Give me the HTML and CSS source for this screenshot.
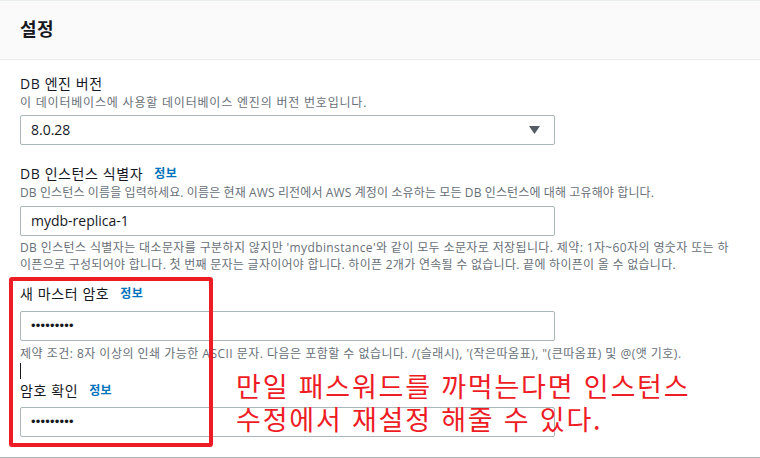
FILE: index.html
```html
<!DOCTYPE html>
<html lang="ko">
<head>
<meta charset="utf-8">
<title>설정</title>
<link rel="stylesheet" href="styles.css">
</head>
<body>
<div class="panel">
  <header class="panel-header">
    <h2 class="panel-title">설정</h2>
  </header>
  <div class="panel-body">
    <div class="field field-engine">
      <div class="label">DB 엔진 버전</div>
      <div class="desc desc-engine">이 데이터베이스에 사용할 데이터베이스 엔진의 버전 번호입니다.</div>
      <div class="control select">
        <span class="value">8.0.28</span>
        <svg class="caret-down" width="11" height="8" viewBox="0 0 11 8"><polygon points="0,0 11,0 5.5,8" fill="#545b64"/></svg>
      </div>
    </div>

    <div class="field field-id">
      <div class="label">DB 인스턴스 식별자<a class="info">정보</a></div>
      <div class="desc desc-id">DB 인스턴스 이름을 입력하세요. 이름은 현재 AWS 리전에서 AWS 계정이 소유하는 모든 DB 인스턴스에 대해 고유해야 합니다.</div>
      <div class="control input"><span class="value">mydb-replica-1</span></div>
      <div class="help">
        <span class="help-line help-l1">DB 인스턴스 식별자는 대소문자를 구분하지 않지만 'mydbinstance'와 같이 모두 소문자로 저장됩니다. 제약: 1자~60자의 영숫자 또는 하</span>
        <span class="help-line help-l2">이픈으로 구성되어야 합니다. 첫 번째 문자는 글자이어야 합니다. 하이픈 2개가 연속될 수 없습니다. 끝에 하이픈이 올 수 없습니다.</span>
      </div>
    </div>

    <div class="field field-pass">
      <div class="label">새 마스터 암호<a class="info">정보</a></div>
      <div class="control input"><span class="value dots">•••••••••</span></div>
      <div class="help help-pass">제약 조건: 8자 이상의 인쇄 가능한 ASCII 문자. 다음은 포함할 수 없습니다. /(슬래시), '(작은따옴표), "(큰따옴표) 및 @(앳 기호).</div>
      <div class="text-caret"></div>
    </div>

    <div class="field field-confirm">
      <div class="label">암호 확인<a class="info">정보</a></div>
      <div class="control input"><span class="value dots">•••••••••</span></div>
    </div>
  </div>

  <div class="annot-box"></div>
  <div class="annot-text">만일 패스워드를 까먹는다면 인스턴스<br>수정에서 재설정 해줄 수 있다.</div>
</div>
</body>
</html>
```

FILE: styles.css
```css
* { box-sizing: border-box; }

html, body {
  margin: 0;
  padding: 0;
  background: #ffffff;
}

body {
  font-family: "Open Sans", "Noto Sans CJK KR", sans-serif;
  color: #16191f;
  width: 760px;
  height: 458px;
  overflow: hidden;
}

.panel {
  position: relative;
  width: 760px;
}

.panel-header {
  background: #fafafa;
  border-top: 1px solid #eaeded;
  border-bottom: 1px solid #eaeded;
  height: 60px;
  padding: 16px 20px 0;
}

.panel-title {
  margin: 0;
  font-size: 18px;
  line-height: 24px;
  font-weight: 700;
  letter-spacing: 0.5px;
  color: #16191f;
}

.panel-body {
  padding: 14px 20px 20px;
  border-bottom: 1px solid #aab7b8;
}

.field { display: flex; flex-direction: column; align-items: flex-start; }

.field-id { margin-top: 19px; }
.field-pass { margin-top: 11px; }
.field-confirm { margin-top: 2px; }

.label {
  font-size: 14px;
  line-height: 20px;
  letter-spacing: 0.6px;
  color: #16191f;
  display: flex;
  align-items: center;
}

.info {
  margin-left: 11px;
  font-size: 12px;
  font-weight: 700;
  letter-spacing: 0.4px;
  color: #0073bb;
  text-decoration: none;
}

.desc {
  font-size: 12px;
  line-height: 17px;
  color: #687078;
  white-space: nowrap;
}

.desc-engine { letter-spacing: 0.8px; }
.desc-id { letter-spacing: 0.12px; }

.help {
  font-size: 12px;
  line-height: 17px;
  color: #687078;
  margin-top: 3px;
  white-space: nowrap;
  display: flex;
  flex-direction: column;
}

.help-l1 { letter-spacing: 0.38px; }
.help-l2 { letter-spacing: 0.28px; }

.help-pass {
  margin-top: 4px;
  letter-spacing: 0.48px;
}

.control {
  width: 535px;
  height: 30px;
  border: 1px solid #aab7b8;
  border-radius: 2px;
  background: #fff;
  display: flex;
  align-items: center;
  padding: 0 14px 0 10px;
  font-size: 14px;
  color: #16191f;
}

.field-engine .control { margin-top: 4px; }
.field-id .control { margin-top: 5px; }
.field-pass .control { margin-top: 7px; }
.field-confirm .control { margin-top: 6px; }

.select { justify-content: space-between; }

.value { line-height: 20px; }

.dots {
  font-family: "Liberation Sans", sans-serif;
  font-size: 13px;
  letter-spacing: 0.2px;
}

.text-caret {
  width: 1px;
  height: 16px;
  background: #16191f;
  margin-top: 1px;
}

.annot-box {
  position: absolute;
  left: 9px;
  top: 277px;
  width: 204px;
  height: 170px;
  border: 4px solid #ee1c25;
  border-radius: 3px;
}

.annot-text {
  position: absolute;
  left: 236px;
  top: 369px;
  font-family: "Noto Sans CJK KR", sans-serif;
  font-size: 27px;
  line-height: 33px;
  letter-spacing: 1.8px;
  color: #ee1c25;
  white-space: nowrap;
}
```
